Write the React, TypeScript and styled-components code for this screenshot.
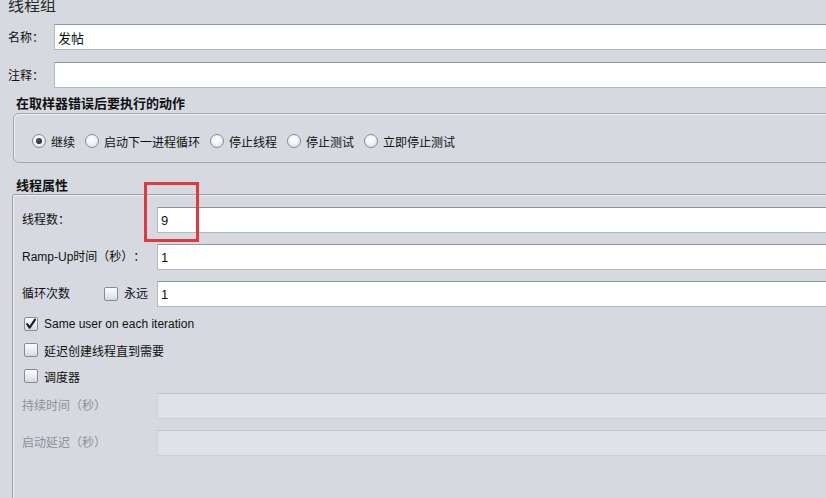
import React from "react";
import styled, { createGlobalStyle } from "styled-components";

const Global = createGlobalStyle`
  html, body {
    margin: 0;
    padding: 0;
    background: #d6d9df;
  }
  body {
    font-family: "Liberation Sans", "Noto Sans CJK SC", sans-serif;
    font-size: 12px;
    color: #1a1a1a;
    text-spacing-trim: space-all;
  }
`;

const Page = styled.div`
  position: relative;
  width: 826px;
  height: 498px;
  overflow: hidden;
  display: flex;
  flex-direction: column;
  background: #d6d9df;
`;

const Title = styled.div`
  margin-top: -4px;
  padding-left: 8px;
  font-family: "Noto Sans CJK SC", sans-serif;
  font-size: 16px;
  line-height: 16px;
  height: 16px;
  color: #2a2a2a;
`;

const FieldRow = styled.div<{ $top: number }>`
  display: flex;
  align-items: center;
  margin-top: ${(p) => p.$top}px;
  padding-left: 8px;
  margin-right: -6px;
  height: 26px;
`;

const RowLabel = styled.label`
  width: 46px;
  flex: none;
  font-family: "Noto Sans CJK SC", sans-serif;
  font-size: 12px;
  line-height: 16px;
  color: #111;
`;

const TextInput = styled.div<{ $disabled?: boolean }>`
  flex: 1;
  height: 26px;
  box-sizing: border-box;
  display: flex;
  align-items: center;
  padding-left: 3px;
  background: ${(p) => (p.$disabled ? "#dfe2e6" : "#ffffff")};
  border: 1px solid ${(p) => (p.$disabled ? "#cdd1d6" : "#b4b9c0")};
  border-top-color: ${(p) => (p.$disabled ? "#c2c6cc" : "#8f959d")};
  font-family: "Liberation Sans", "Noto Sans CJK SC", sans-serif;
  font-size: 13px;
  color: #111;
`;

const SectionLabel = styled.div<{ $top: number }>`
  margin-top: ${(p) => p.$top}px;
  padding-left: 16px;
  height: 16px;
  font-family: "Noto Sans CJK SC", sans-serif;
  font-size: 13px;
  font-weight: 700;
  line-height: 16px;
  color: #111;
`;

const GroupBox = styled.div`
  margin: 2px -8px 0 13px;
  height: 50px;
  box-sizing: border-box;
  border: 1px solid #a2a7b0;
  border-radius: 6px;
  box-shadow: inset 1px 1px 0 rgba(255, 255, 255, 0.55);
  padding: 20px 0 0 18px;
  display: flex;
  align-items: flex-start;
`;

const RadioItem = styled.label`
  display: flex;
  align-items: center;
  height: 14px;
  margin-right: 10px;
  font-family: "Noto Sans CJK SC", sans-serif;
  font-size: 12px;
  color: #111;
`;

const RadioCircle = styled.span<{ $checked?: boolean }>`
  position: relative;
  width: 14px;
  height: 14px;
  box-sizing: border-box;
  border-radius: 50%;
  border: 1px solid #868c95;
  background: radial-gradient(circle at 45% 40%, #ffffff 0%, #f1f3f5 45%, #cfd4da 100%);
  margin-right: 5px;
  flex: none;
  &::after {
    content: "";
    display: ${(p) => (p.$checked ? "block" : "none")};
    position: absolute;
    left: 3px;
    top: 3px;
    width: 6px;
    height: 6px;
    border-radius: 50%;
    background: radial-gradient(circle at 40% 35%, #5a5f66 0%, #1e2226 80%);
  }
`;

const ThreadBox = styled.div`
  flex: 1;
  margin: 1px -10px -20px 12px;
  border: 1px solid #9ca2ab;
  box-shadow: inset 1px 1px 0 rgba(255, 255, 255, 0.5);
  border-radius: 2px;
  padding: 12px 0 0 9px;
  display: flex;
  flex-direction: column;
`;

const PropRow = styled.div<{ $top: number; $h?: number }>`
  display: flex;
  align-items: center;
  height: ${(p) => p.$h ?? 26}px;
  margin-top: ${(p) => p.$top}px;
`;

const PropLabel = styled.div<{ $disabled?: boolean }>`
  width: 135px;
  flex: none;
  box-sizing: border-box;
  padding-right: 9px;
  display: flex;
  align-items: center;
  justify-content: space-between;
  font-family: "Liberation Sans", "Noto Sans CJK SC", sans-serif;
  font-size: 12px;
  line-height: 16px;
  color: ${(p) => (p.$disabled ? "#8d9198" : "#111")};
`;

const CheckItem = styled.label`
  display: flex;
  align-items: center;
  font-family: "Liberation Sans", "Noto Sans CJK SC", sans-serif;
  font-size: 12px;
  color: #111;
`;

const CheckBoxShape = styled.span<{ $indent?: number }>`
  width: 14px;
  height: 14px;
  box-sizing: border-box;
  border: 1px solid #868c95;
  border-radius: 2px;
  background: linear-gradient(180deg, #fbfcfd 0%, #e9ecef 55%, #d3d8de 100%);
  margin-left: ${(p) => p.$indent ?? 0}px;
  margin-right: 6px;
  display: flex;
  align-items: center;
  justify-content: center;
  flex: none;
`;

const Highlight = styled.div`
  position: absolute;
  left: 144px;
  top: 182px;
  width: 55px;
  height: 60px;
  box-sizing: border-box;
  border: 3px solid #df3a40;
  pointer-events: none;
`;

const CheckMark = () => (
  <svg width="12" height="12" viewBox="0 0 12 12">
    <path d="M2.2 6.2 L4.6 9.6 L10 1.6" fill="none" stroke="#1d2126" strokeWidth="2.2" strokeLinecap="round" strokeLinejoin="round" />
  </svg>
);

const Check = ({ checked, indent }: { checked?: boolean; indent?: number }) => (
  <CheckBoxShape $indent={indent}>{checked ? <CheckMark /> : null}</CheckBoxShape>
);

const radios = [
  { label: "继续", checked: true },
  { label: "启动下一进程循环" },
  { label: "停止线程" },
  { label: "停止测试" },
  { label: "立即停止测试" },
];

export default function App() {
  return (
    <>
      <Global />
      <Page>
        <Title>线程组</Title>
        <FieldRow $top={12}>
          <RowLabel>名称：</RowLabel>
          <TextInput>发帖</TextInput>
        </FieldRow>
        <FieldRow $top={12}>
          <RowLabel>注释：</RowLabel>
          <TextInput />
        </FieldRow>

        <SectionLabel $top={7}>在取样器错误后要执行的动作</SectionLabel>
        <GroupBox>
          {radios.map((r) => (
            <RadioItem key={r.label}>
              <RadioCircle $checked={r.checked} />
              {r.label}
            </RadioItem>
          ))}
        </GroupBox>

        <SectionLabel $top={14}>线程属性</SectionLabel>
        <ThreadBox>
          <PropRow $top={0}>
            <PropLabel>线程数：</PropLabel>
            <TextInput>9</TextInput>
          </PropRow>
          <PropRow $top={11}>
            <PropLabel>Ramp-Up时间（秒）：</PropLabel>
            <TextInput>1</TextInput>
          </PropRow>
          <PropRow $top={11}>
            <PropLabel>
              <span>循环次数</span>
              <CheckItem>
                <Check />
                永远
              </CheckItem>
            </PropLabel>
            <TextInput>1</TextInput>
          </PropRow>
          <PropRow $top={4}>
            <CheckItem>
              <Check checked indent={2} />
              Same user on each iteration
            </CheckItem>
          </PropRow>
          <PropRow $top={0}>
            <CheckItem>
              <Check indent={2} />
              延迟创建线程直到需要
            </CheckItem>
          </PropRow>
          <PropRow $top={0}>
            <CheckItem>
              <Check indent={2} />
              调度器
            </CheckItem>
          </PropRow>
          <PropRow $top={4}>
            <PropLabel $disabled>持续时间（秒）</PropLabel>
            <TextInput $disabled />
          </PropRow>
          <PropRow $top={11}>
            <PropLabel $disabled>启动延迟（秒）</PropLabel>
            <TextInput $disabled />
          </PropRow>
        </ThreadBox>
        <Highlight />
      </Page>
    </>
  );
}
